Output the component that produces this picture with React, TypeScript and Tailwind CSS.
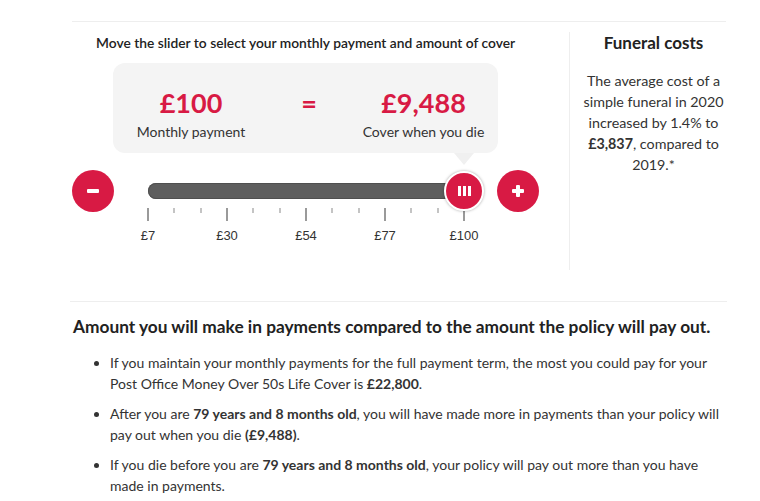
import React from 'react';

const ticks = Array.from({ length: 13 }, (_, i) => i);
const labels = ['£7', '£30', '£54', '£77', '£100'];

const RoundButton: React.FC<{ kind: 'minus' | 'plus' }> = ({ kind }) => (
  <button
    type="button"
    className="w-[42px] h-[42px] rounded-full bg-[#d81a44] flex items-center justify-center shrink-0"
  >
    {kind === 'minus' ? (
      <span className="block w-[12px] h-[4px] bg-white rounded-[1px]" />
    ) : (
      <span className="relative block w-[12px] h-[12px]">
        <span className="absolute left-0 top-[4px] w-[12px] h-[4px] bg-white rounded-[1px]" />
        <span className="absolute left-[4px] top-0 w-[4px] h-[12px] bg-white rounded-[1px]" />
      </span>
    )}
  </button>
);

const App: React.FC = () => {
  return (
    <div className="w-[760px] h-[501px] bg-white overflow-hidden font-['Lato',sans-serif] text-[#333]">
      <div className="pt-[21px]">
        <div className="ml-[72px] w-[654px] border-t border-[#eeeeee]" />

        <div className="flex ml-[72px] mt-[10px] h-[238px]">
          {/* slider side */}
          <div className="w-[497px]">
            <p className="ml-[24px] mt-[1px] text-[13.8px] leading-[20px] font-semibold text-[#222]">
              Move the slider to select your monthly payment and amount of cover
            </p>

            <div className="relative ml-[41px] mt-[10px] w-[385px] h-[90px] rounded-[12px] bg-[#f4f4f4] flex items-start pt-[22px]">
              <div className="w-[156px] flex flex-col items-center">
                <span className="text-[27px] leading-[36px] font-bold text-[#d81a44]">£100</span>
                <span className="text-[14px] leading-[20px] mt-[1px]">Monthly payment</span>
              </div>
              <div className="w-[80px] flex justify-center">
                <span className="text-[27px] leading-[36px] font-bold text-[#d81a44]">=</span>
              </div>
              <div className="w-[149px] flex flex-col items-center">
                <span className="text-[27px] leading-[36px] font-bold text-[#d81a44]">£9,488</span>
                <span className="text-[14px] leading-[20px] mt-[1px]">Cover when you die</span>
              </div>
              <span className="absolute left-[341px] top-[90px] w-0 h-0 border-l-[10px] border-r-[10px] border-t-[12px] border-l-transparent border-r-transparent border-t-[#f0f0f0]" />
            </div>

            <div className="flex items-center mt-[17px]">
              <RoundButton kind="minus" />
              <div className="relative ml-[34px] w-[316px] h-[42px] flex items-center">
                <div className="w-[316px] h-[16px] rounded-full bg-[#5e5e5e] shadow-[inset_0_0_0_1px_#4f4f4f]" />
                <div className="absolute right-[-20px] top-[1px] w-[40px] h-[40px] rounded-full bg-[#d81a44] border-2 border-white shadow-[0_0_3px_rgba(0,0,0,0.35)] flex items-center justify-center gap-[2px]">
                  <span className="block w-[3px] h-[10px] bg-white" />
                  <span className="block w-[3px] h-[10px] bg-white" />
                  <span className="block w-[3px] h-[10px] bg-white" />
                </div>
              </div>
              <div className="ml-[33px]">
                <RoundButton kind="plus" />
              </div>
            </div>

            <div className="ml-[75px] mt-[-4px] w-[318px] flex justify-between items-start">
              {ticks.map((i) => (
                <span
                  key={i}
                  className={i % 3 === 0 ? 'block w-[2px] h-[13px] bg-[#9a9a9a]' : 'block w-[2px] h-[5px] bg-[#c4c4c4]'}
                />
              ))}
            </div>
            <div className="ml-[75px] mt-[7px] w-[318px] flex justify-between">
              {labels.map((l) => (
                <span key={l} className="w-[2px] flex justify-center whitespace-nowrap font-['Liberation_Sans',sans-serif] text-[13px] leading-[16px] text-[#333]">
                  {l}
                </span>
              ))}
            </div>
          </div>

          {/* funeral costs */}
          <div className="w-[166px] border-l border-[#eeeeee] flex flex-col items-center pl-[2px]">
            <h3 className="mt-[1px] text-[17px] leading-[20px] font-bold text-[#222]">Funeral costs</h3>
            <p className="mt-[17px] text-[14.3px] leading-[21px] text-center whitespace-nowrap">
              The average cost of a<br />
              simple funeral in 2020<br />
              increased by 1.4% to<br />
              <strong className="font-bold">£3,837</strong>, compared to<br />
              2019.*
            </p>
          </div>
        </div>

        <div className="ml-[70px] mt-[31px] w-[657px] border-t border-[#eeeeee]" />

        <div className="ml-[73px] mt-[14px] w-[670px]">
          <h2 className="text-[17.3px] leading-[22px] font-bold text-[#222]">
            Amount you will make in payments compared to the amount the policy will pay out.
          </h2>
          <ul className="mt-[14px] ml-[19px] list-disc text-[14px] leading-[21px] space-y-[9px] marker:text-[#333] pl-[18px]">
            <li>
              If you maintain your monthly payments for the full payment term, the most you could pay for your<br />
              Post Office Money Over 50s Life Cover is <strong className="font-bold">£22,800</strong>.
            </li>
            <li>
              After you are <strong className="font-bold">79 years and 8 months old</strong>, you will have made more in payments than your policy will<br />
              pay out when you die <strong className="font-bold">(£9,488)</strong>.
            </li>
            <li>
              If you die before you are <strong className="font-bold">79 years and 8 months old</strong>, your policy will pay out more than you have<br />
              made in payments.
            </li>
          </ul>
        </div>
      </div>
    </div>
  );
};

export default App;
